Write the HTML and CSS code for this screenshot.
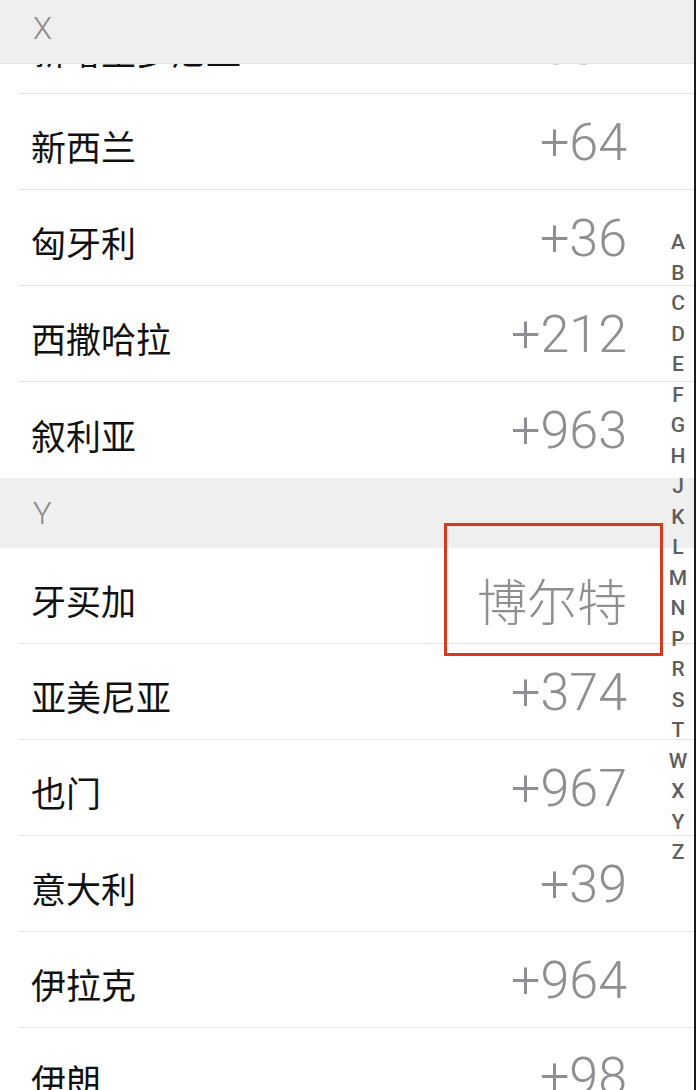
FILE: index.html
```html
<!DOCTYPE html>
<html lang="zh-CN">
<head>
<meta charset="utf-8">
<link rel="stylesheet" href="styles.css">
</head>
<body>
<div class="screen">
  <div class="list">
    <div class="row"><span class="name">新喀里多尼亚</span><span class="code">+687</span></div>
    <div class="row"><span class="name">新西兰</span><span class="code">+64</span></div>
    <div class="row"><span class="name">匈牙利</span><span class="code">+36</span></div>
    <div class="row"><span class="name">西撒哈拉</span><span class="code">+212</span></div>
    <div class="row last"><span class="name">叙利亚</span><span class="code">+963</span></div>
    <div class="section">Y</div>
    <div class="row"><span class="name">牙买加</span><span class="code cjk">博尔特</span></div>
    <div class="row"><span class="name">亚美尼亚</span><span class="code">+374</span></div>
    <div class="row"><span class="name">也门</span><span class="code">+967</span></div>
    <div class="row"><span class="name">意大利</span><span class="code">+39</span></div>
    <div class="row"><span class="name">伊拉克</span><span class="code">+964</span></div>
    <div class="row"><span class="name">伊朗</span><span class="code">+98</span></div>
  </div>
  <div class="section sticky">X</div>
  <div class="highlight"></div>
  <ul class="index">
    <li>A</li><li>B</li><li>C</li><li>D</li><li>E</li><li>F</li><li>G</li><li>H</li><li>J</li><li>K</li><li>L</li><li>M</li><li>N</li><li>P</li><li>R</li><li>S</li><li>T</li><li>W</li><li>X</li><li>Y</li><li>Z</li>
  </ul>
</div>
</body>
</html>
```
FILE: styles.css
```css
html, body {
  margin: 0;
  padding: 0;
  background: #ffffff;
}
body {
  width: 696px;
  height: 1090px;
  overflow: hidden;
}
.screen {
  position: relative;
  width: 694px;
  height: 1090px;
  overflow: hidden;
  border-right: 2px solid #1c1c1c;
  background: #ffffff;
}
.list {
  display: flex;
  flex-direction: column;
  margin-top: -2px;
}
.row {
  display: flex;
  align-items: center;
  justify-content: space-between;
  box-sizing: border-box;
  height: 96px;
  margin-left: 19px;
  padding: 0 67px 0 12px;
  border-bottom: 1px solid #e4e4e4;
}
.row.last {
  border-bottom: none;
}
.name {
  font-family: "Noto Sans CJK SC", sans-serif;
  font-size: 35px;
  font-weight: 400;
  color: #111111;
  line-height: 1;
  padding-top: 8px;
}
.code {
  font-family: Roboto, "Liberation Sans", sans-serif;
  font-size: 52px;
  font-weight: 300;
  color: #8e8e93;
  line-height: 1;
  padding-top: 2px;
}
.code.cjk {
  font-family: "Noto Sans CJK SC", sans-serif;
  font-size: 50px;
  font-weight: 300;
  padding-top: 6px;
}
.section {
  box-sizing: border-box;
  height: 70px;
  display: flex;
  align-items: center;
  padding-left: 33px;
  background: #efefef;
  font-family: Roboto, "Liberation Sans", sans-serif;
  font-size: 31px;
  font-weight: 300;
  color: #8a8a8a;
}
.sticky {
  position: absolute;
  top: -6px;
  left: 0;
  right: 0;
  border-bottom: 1px solid #e2e2e2;
}
.highlight {
  position: absolute;
  left: 444px;
  top: 523px;
  width: 219px;
  height: 133px;
  box-sizing: border-box;
  border: 3px solid #d43a20;
}
.index {
  position: absolute;
  top: 227px;
  right: 3px;
  width: 26px;
  margin: 0;
  padding: 0;
  list-style: none;
  display: flex;
  flex-direction: column;
  align-items: center;
  font-family: Roboto, "Liberation Sans", sans-serif;
  font-size: 21px;
  font-weight: 500;
  color: #5e5e5e;
}
.index li {
  height: 30.5px;
  line-height: 30.5px;
}
```
